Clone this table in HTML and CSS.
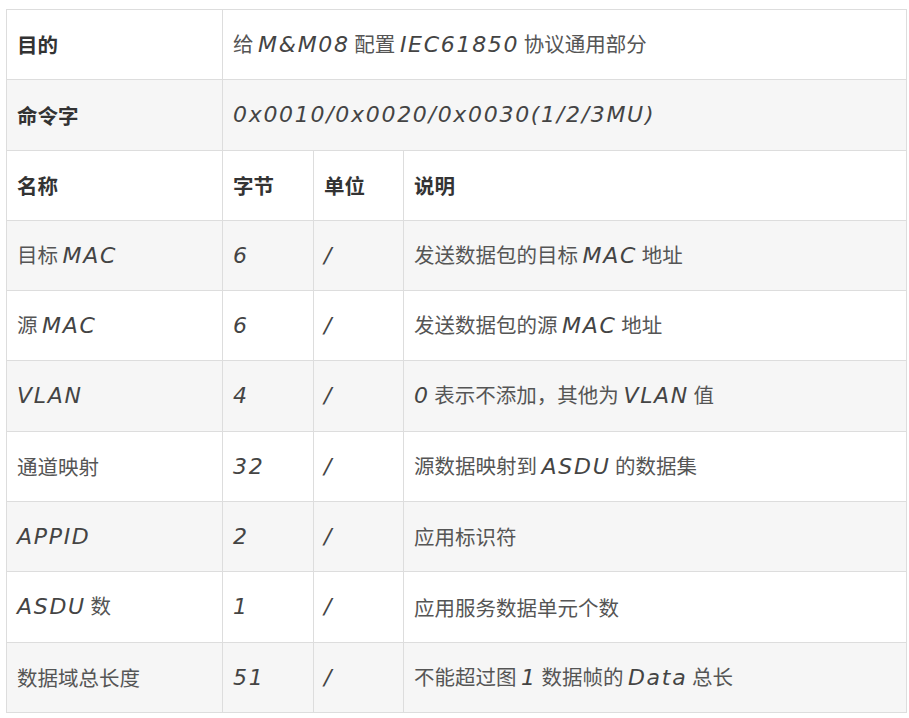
FILE: index.html
```html
<!DOCTYPE html>
<html lang="zh">
<head>
<meta charset="utf-8">
<link rel="stylesheet" href="styles.css">
</head>
<body>
<table class="spec">
  <colgroup>
    <col class="c1"><col class="c2"><col class="c3"><col class="c4">
  </colgroup>
  <tr>
    <th>目的</th>
    <td colspan="3">给 <span class="en">M&amp;M08</span> 配置 <span class="en">IEC61850</span> 协议通用部分</td>
  </tr>
  <tr>
    <th>命令字</th>
    <td colspan="3"><span class="en">0x0010/0x0020/0x0030(1/2/3MU)</span></td>
  </tr>
  <tr>
    <th>名称</th>
    <th>字节</th>
    <th>单位</th>
    <th>说明</th>
  </tr>
  <tr>
    <td>目标 <span class="en">MAC</span></td>
    <td><span class="en">6</span></td>
    <td><span class="en">/</span></td>
    <td>发送数据包的目标 <span class="en">MAC</span> 地址</td>
  </tr>
  <tr>
    <td>源 <span class="en">MAC</span></td>
    <td><span class="en">6</span></td>
    <td><span class="en">/</span></td>
    <td>发送数据包的源 <span class="en">MAC</span> 地址</td>
  </tr>
  <tr>
    <td><span class="en">VLAN</span></td>
    <td><span class="en">4</span></td>
    <td><span class="en">/</span></td>
    <td><span class="en">0</span> 表示不添加，其他为 <span class="en">VLAN</span> 值</td>
  </tr>
  <tr>
    <td>通道映射</td>
    <td><span class="en">32</span></td>
    <td><span class="en">/</span></td>
    <td>源数据映射到 <span class="en">ASDU</span> 的数据集</td>
  </tr>
  <tr>
    <td><span class="en">APPID</span></td>
    <td><span class="en">2</span></td>
    <td><span class="en">/</span></td>
    <td>应用标识符</td>
  </tr>
  <tr>
    <td><span class="en">ASDU</span> 数</td>
    <td><span class="en">1</span></td>
    <td><span class="en">/</span></td>
    <td>应用服务数据单元个数</td>
  </tr>
  <tr>
    <td>数据域总长度</td>
    <td><span class="en">51</span></td>
    <td><span class="en">/</span></td>
    <td>不能超过图 <span class="en">1</span> 数据帧的 <span class="en">Data</span> 总长</td>
  </tr>
</table>
</body>
</html>
```

FILE: styles.css
```css
html, body {
  margin: 0;
  background: #ffffff;
}
body {
  padding: 9px 3px 0 6px;
  font-family: "Noto Sans CJK SC", "Noto Sans", sans-serif;
  color: #555555;
}
.spec {
  border-collapse: collapse;
  width: 900px;
  table-layout: fixed;
  font-size: 20.5px;
}
.c1 { width: 216px; }
.c2 { width: 91px; }
.c3 { width: 90px; }
.c4 { width: 503px; }
.spec th,
.spec td {
  border: 1px solid #dddddd;
  height: 69.3px;
  padding: 0 10px;
  text-align: left;
  vertical-align: middle;
  white-space: nowrap;
  line-height: 1.2;
}
.spec th {
  font-weight: bold;
  color: #333333;
}
.spec tr:nth-child(even) {
  background: #f6f6f6;
}
.en {
  font-family: "DejaVu Sans", sans-serif;
  font-style: italic;
  font-size: 22px;
  letter-spacing: 1.7px;
  color: #444444;
}
```
